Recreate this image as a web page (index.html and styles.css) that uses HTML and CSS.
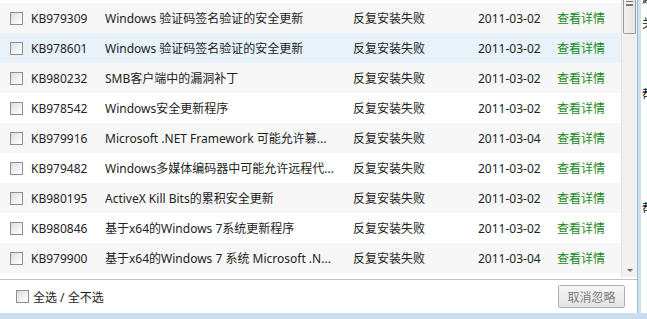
FILE: index.html
```html
<!DOCTYPE html>
<html lang="zh-CN">
<head>
<meta charset="utf-8">
<title>忽略的更新</title>
<link rel="stylesheet" href="styles.css">
</head>
<body>
<div class="screen">
  <div class="panel">
    <div class="listwrap">
      <div class="list">
        <div class="row alt"><span class="cb"></span><span class="kb">KB979309</span><span class="title">Windows 验证码签名验证的安全更新</span><span class="status">反复安装失败</span><span class="date">2011-03-02</span><a class="link">查看详情</a></div>
        <div class="row hover"><span class="cb"></span><span class="kb">KB978601</span><span class="title">Windows 验证码签名验证的安全更新</span><span class="status">反复安装失败</span><span class="date">2011-03-02</span><a class="link">查看详情</a></div>
        <div class="row alt"><span class="cb"></span><span class="kb">KB980232</span><span class="title">SMB客户端中的漏洞补丁</span><span class="status">反复安装失败</span><span class="date">2011-03-02</span><a class="link">查看详情</a></div>
        <div class="row"><span class="cb"></span><span class="kb">KB978542</span><span class="title">Windows安全更新程序</span><span class="status">反复安装失败</span><span class="date">2011-03-02</span><a class="link">查看详情</a></div>
        <div class="row alt"><span class="cb"></span><span class="kb">KB979916</span><span class="title">Microsoft .NET Framework 可能允许篡...</span><span class="status">反复安装失败</span><span class="date">2011-03-04</span><a class="link">查看详情</a></div>
        <div class="row"><span class="cb"></span><span class="kb">KB979482</span><span class="title">Windows多媒体编码器中可能允许远程代...</span><span class="status">反复安装失败</span><span class="date">2011-03-02</span><a class="link">查看详情</a></div>
        <div class="row alt"><span class="cb"></span><span class="kb">KB980195</span><span class="title">ActiveX Kill Bits的累积安全更新</span><span class="status">反复安装失败</span><span class="date">2011-03-02</span><a class="link">查看详情</a></div>
        <div class="row"><span class="cb"></span><span class="kb">KB980846</span><span class="title">基于x64的Windows 7系统更新程序</span><span class="status">反复安装失败</span><span class="date">2011-03-02</span><a class="link">查看详情</a></div>
        <div class="row alt"><span class="cb"></span><span class="kb">KB979900</span><span class="title">基于x64的Windows 7 系统 Microsoft .N...</span><span class="status">反复安装失败</span><span class="date">2011-03-04</span><a class="link">查看详情</a></div>
      </div>
      <div class="scrollbar">
        <div class="thumb"><span class="grip"></span></div>
        <div class="track"></div>
        <div class="arrow"></div>
      </div>
    </div>
    <div class="footer">
      <label class="selall"><span class="cb"></span>全选 / 全不选</label>
      <button class="btn">取消忽略</button>
    </div>
  </div>
  <div class="side">
    <div class="edge"></div>
    <div class="peek">
      <span class="g g1">题</span>
      <span class="g g2">关</span>
      <span class="g g3">帮</span>
      <span class="g g4">帮</span>
    </div>
  </div>
</div>
</body>
</html>
```

FILE: styles.css
```css
html, body {
  margin: 0;
  padding: 0;
}
body {
  width: 647px;
  height: 319px;
  overflow: hidden;
  background: #c9ddf0;
  font-family: "Segoe UI", "Noto Sans", "Noto Sans CJK SC", sans-serif;
  font-size: 12px;
  color: #222;
}
.screen {
  display: flex;
  height: 319px;
}
.panel {
  width: 637px;
  height: 313px;
  background: #fff;
  display: flex;
  flex-direction: column;
}
.listwrap {
  display: flex;
  height: 280px;
  border-bottom: 1px solid #c4c4c4;
  box-sizing: border-box;
}
.list {
  flex: 1;
  padding-top: 3px;
  overflow: hidden;
}
.row {
  display: flex;
  align-items: center;
  height: 30px;
  background: #fff;
  white-space: nowrap;
}
.row.alt {
  background: #f7f7f7;
}
.row.hover {
  background: #e8f2fa;
}
.cb {
  display: inline-block;
  width: 11px;
  height: 11px;
  border: 1px solid #8e8f8f;
  background: linear-gradient(135deg, #dcdcdc 0%, #f4f4f4 60%, #fff 100%);
  box-sizing: content-box;
  flex: none;
}
.row .cb {
  margin-left: 10px;
  margin-right: 8px;
}
.kb {
  width: 74px;
  flex: none;
}
.title {
  width: 248px;
  flex: none;
  overflow: hidden;
}
.status {
  width: 125px;
  flex: none;
}
.date {
  width: 79px;
  flex: none;
}
.link {
  color: #198a19;
  cursor: pointer;
}
.scrollbar {
  width: 15px;
  flex: none;
  display: flex;
  flex-direction: column;
  background: #f0f0f0;
  border-left: 1px solid #e2e2e2;
  margin-bottom: 2px;
}
.thumb {
  height: 33px;
  margin: 0 1px;
  border: 1px solid #9c9c9c;
  border-top: none;
  border-radius: 0 0 2px 2px;
  background: linear-gradient(90deg, #f2f2f2, #e4e4e4);
  display: flex;
  justify-content: center;
}
.grip {
  margin-top: 1px;
  width: 7px;
  height: 5px;
  border-top: 1px solid #777;
  border-bottom: 1px solid #777;
  background: linear-gradient(#fff 0 1px, #777 1px 2px, transparent 2px);
  background-size: 100% 2px;
  background-position: 0 1px;
  background-repeat: no-repeat;
  box-sizing: border-box;
}
.track {
  flex: 1;
}
.arrow {
  height: 14px;
  display: flex;
  justify-content: center;
  align-items: center;
}
.arrow::before {
  content: "";
  border-left: 3px solid transparent;
  border-right: 3px solid transparent;
  border-top: 3px solid #6e6e6e;
}
.footer {
  flex: 1;
  display: flex;
  align-items: center;
  justify-content: space-between;
  padding: 0 12px 0 16px;
}
.selall {
  display: flex;
  align-items: center;
  gap: 4px;
  color: #222;
}
.btn {
  width: 67px;
  height: 23px;
  padding: 0;
  border: 1px solid #b0b0b0;
  border-radius: 2px;
  background: linear-gradient(#f6f6f6, #e4e4e4);
  color: #7c7c7c;
  font-family: inherit;
  font-size: 12px;
}
.side {
  flex: 1;
  display: flex;
  height: 313px;
}
.edge {
  width: 3px;
  background: #cfe0f1;
  border-left: 1px solid #9fbad6;
}
.peek {
  flex: 1;
  background: #fff;
  position: relative;
  overflow: hidden;
}
.g {
  position: absolute;
  left: 1px;
  font-size: 12px;
  color: #111;
  line-height: 12px;
}
.g1 { top: -7px; }
.g2 { top: 18px; }
.g3 { top: 89px; }
.g4 { top: 203px; }
```
